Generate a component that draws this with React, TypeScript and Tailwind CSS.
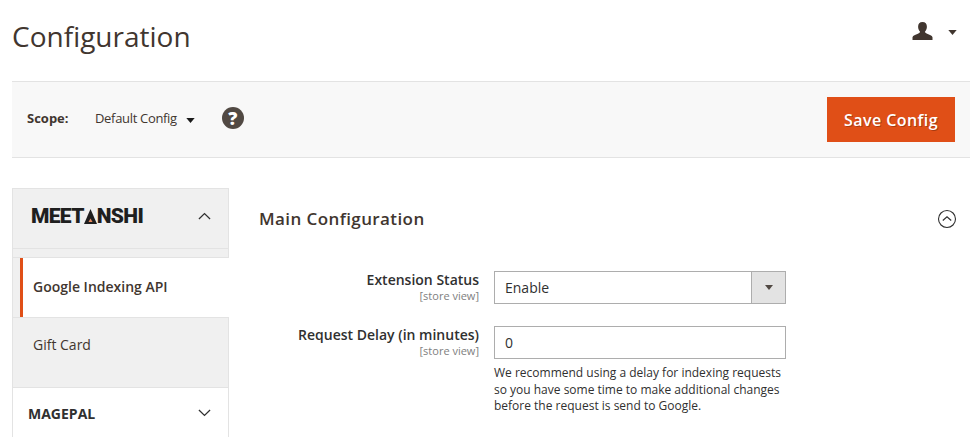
const font = { fontFamily: '"Open Sans", sans-serif' };

function Caret({ className }: { className: string }) {
  return (
    <svg className={className} viewBox="0 0 10 6" width="10" height="6">
      <path d="M0 0h10L5 6z" fill="currentColor" />
    </svg>
  );
}

function Chevron({ up }: { up?: boolean }) {
  return (
    <svg viewBox="0 0 14 8" width="13" height="8" fill="none" stroke="#303030" strokeWidth="1.4">
      <path d={up ? 'M1 7.2 7 1.4l6 5.8' : 'M1 .8l6 5.8 6-5.8'} />
    </svg>
  );
}

function FieldLabel({ title }: { title: string }) {
  return (
    <div className="w-[265px] shrink-0 pr-[15px] text-right">
      <div className="text-[14px] font-semibold leading-[18px] text-[#303030]">{title}</div>
      <div className="text-[11px] leading-[13px] text-[#808080]">[store view]</div>
    </div>
  );
}

export default function App() {
  return (
    <div className="h-[437px] w-[980px] overflow-hidden bg-white pl-3 pr-[10px]" style={font}>
      {/* Header */}
      <div className="flex h-[81px] items-start justify-between">
        <h1 className="pt-[17px] text-[28px] font-normal leading-[38px] text-[#41362f]">Configuration</h1>
        <div className="flex items-center gap-[15px] pr-[13px] pt-[22px]">
          <svg viewBox="0 0 20 18" width="21" height="18" fill="#41362f">
            <path d="M10 0c2.9 0 4.4 2 4.4 4.8 0 2-.8 3.900-2 5 .1.900.8 1.400 2.200 2 2.400.900 5 1.800 5.400 3.500V18H0v-2.700c.4-1.700 3-2.600 5.400-3.500 1.400-.6 2.100-1.100 2.200-2-1.200-1.100-2-3-2-5C5.600 2 7.100 0 10 0z" />
          </svg>
          <Caret className="mt-[2px] h-[5px] w-[9px] text-[#41362f]" />
        </div>
      </div>

      {/* Scope bar */}
      <div className="flex h-[77px] items-center justify-between border-y border-[#e3e3e3] bg-[#f8f8f8] pl-[15px] pr-[15px]">
        <div className="flex items-center text-[#41362f]">
          <span className="-mt-[4px] w-[68px] text-[13px] font-bold leading-[18px]">Scope:</span>
          <span className="-mt-[4px] text-[13px] leading-[18px] tracking-[-0.32px] text-[#41362f]">Default Config</span>
          <Caret className="ml-[9px] mt-[1px] h-[5px] w-[9px] text-[#1a1a1a]" />
          <span className="-mt-[4px] ml-[27px] flex h-[22px] w-[22px] items-center justify-center rounded-full bg-[#514943] text-[18px] font-extrabold leading-none text-white">?</span>
        </div>
        <button className="h-[45px] w-[128px] bg-[#e04f17] text-[16px] font-semibold tracking-[0.45px] text-white [text-shadow:1px_1px_0_rgba(0,0,0,0.25)]">
          Save Config
        </button>
      </div>

      {/* Content */}
      <div className="flex pt-[30px]">
        {/* Sidebar */}
        <div className="w-[217px] shrink-0">
          <div className="flex h-[61px] items-center justify-between border border-[#e3e3e3] bg-[#f0f0f0] pb-[5px] pl-[18px] pr-[17px]">
            <div className="flex items-center text-[21px] font-black leading-none tracking-[-0.65px] text-[#1f1f1f]" style={{ fontFamily: 'Roboto, sans-serif' }}>
              MEET
              <svg viewBox="0 0 13 15" width="13" height="15">
                <path d="M6.500 0 13 15H0z" fill="#1f1f1f" />
                <path d="M6.500 9.500 8.500 13h-4z" fill="#e98a5f" />
              </svg>
              NSHI
            </div>
            <Chevron up />
          </div>
          <div className="h-[9px] border-x border-b border-[#e3e3e3] bg-[#f0f0f0]" />
          <div className="flex">
            <div className="w-[8px] shrink-0 border-l border-[#e3e3e3] bg-[#f0f0f0]" />
            <div className="flex h-[59px] flex-1 items-center border-l-[3px] border-[#e04f17] bg-white pb-[2px] pl-[10px] text-[14px] font-semibold text-[#41362f]">
              Google Indexing API
            </div>
          </div>
          <div className="h-[71px] border border-[#e3e3e3] bg-[#f0f0f0] pl-[20px] pt-[15px] text-[14px] leading-[24px] text-[#41362f]">
            Gift Card
          </div>
          <div className="flex h-[50px] items-center justify-between border-x border-[#e3e3e3] pl-[15px] pr-[17px]">
            <span className="text-[14px] font-bold text-[#303030]">MAGEPAL</span>
            <Chevron />
          </div>
        </div>

        {/* Main */}
        <div className="min-w-0 flex-1">
          <div className="flex h-[62px] items-center justify-between pl-[30px] pr-[13px]">
            <h2 className="text-[17px] font-semibold tracking-[0.4px] text-[#41362f]">Main Configuration</h2>
            <svg viewBox="0 0 20 20" width="20" height="20" fill="none" stroke="#303030" strokeWidth="1.100">
              <circle cx="10" cy="10" r="8.500" />
              <path d="M5.800 11.500 10 7.800l4.200 3.700" strokeWidth="1.200" />
            </svg>
          </div>
          <div className="pt-[21px]">
            <div className="flex">
              <FieldLabel title="Extension Status" />
              <div className="flex h-[33px] w-[292px] border border-[#adadad] bg-white">
                <span className="flex-1 pl-[10px] text-[14px] leading-[31px] text-[#303030]">Enable</span>
                <span className="flex w-[34px] items-center justify-center border-l border-[#adadad] bg-[#e3e3e3]">
                  <Caret className="h-[5px] w-[8px] text-[#514943]" />
                </span>
              </div>
            </div>
            <div className="mt-[22px] flex">
              <FieldLabel title="Request Delay (in minutes)" />
              <div>
                <div className="h-[33px] w-[292px] border border-[#adadad] bg-white pl-[10px] text-[14px] leading-[31px] text-[#303030]">0</div>
                <p className="mt-[6px] w-[292px] text-[12px] leading-[16.500px] text-[#303030]">
                  We recommend using a delay for indexing requests so you have some time to make additional changes before the request is send to Google.
                </p>
              </div>
            </div>
          </div>
        </div>
      </div>
    </div>
  );
}
